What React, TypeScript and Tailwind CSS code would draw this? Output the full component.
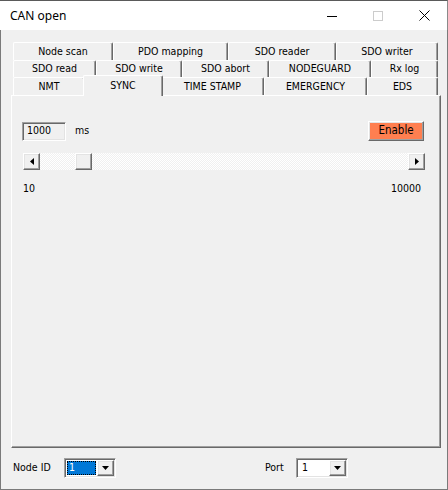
import React from 'react';

// classic win32 3D edges
const raised =
  'border border-t-white border-l-white border-r-[#696969] border-b-[#696969] shadow-[inset_-1px_-1px_0_#a0a0a0,inset_1px_1px_0_#e3e3e3]';
const sunken =
  'border border-t-[#a0a0a0] border-l-[#a0a0a0] border-r-white border-b-white shadow-[inset_1px_1px_0_#696969,inset_-1px_-1px_0_#e3e3e3]';

type TabDef = { label: string; w: string; active?: boolean };

const row1: TabDef[] = [
  { label: 'Node scan', w: 'w-[100px]' },
  { label: 'PDO mapping', w: 'w-[115px]' },
  { label: 'SDO reader', w: 'w-[108px]' },
  { label: 'SDO writer', w: 'w-[102px]' },
];
const row2: TabDef[] = [
  { label: 'SDO read', w: 'w-[83px]' },
  { label: 'SDO write', w: 'w-[86px]' },
  { label: 'SDO abort', w: 'w-[87px]' },
  { label: 'NODEGUARD', w: 'w-[102px]' },
  { label: 'Rx log', w: 'w-[67px]' },
];
const row3: TabDef[] = [
  { label: 'NMT', w: 'w-[72px]' },
  { label: 'SYNC', w: 'w-[80px] -mx-[2px]', active: true },
  { label: 'TIME STAMP', w: 'w-[103px]' },
  { label: 'EMERGENCY', w: 'w-[103px]' },
  { label: 'EDS', w: 'w-[71px]' },
];

const Tab: React.FC<{ tab: TabDef; h: string }> = ({ tab, h }) => {
  if (tab.active) {
    return (
      <div
        className={`${tab.w} relative z-10 h-[21px] -mb-[1px] flex items-start justify-center pt-[2px] bg-[#f0f0f0] border-t border-l border-r border-t-white border-l-white border-r-[#696969] rounded-t-[2px] shadow-[inset_-1px_0_0_#a0a0a0]`}
      >
        {tab.label}
      </div>
    );
  }
  return (
    <div
      className={`${tab.w} ${h} flex items-center justify-center bg-[#f0f0f0] border-t border-l border-r border-t-white border-l-white border-r-[#696969] rounded-t-[2px] shadow-[inset_-1px_0_0_#a0a0a0]`}
    >
      {tab.label}
    </div>
  );
};

const DownArrow = () => (
  <svg width="7" height="4" viewBox="0 0 7 4">
    <path d="M0 0h7L3.5 4z" fill="#000" />
  </svg>
);

const Combo: React.FC<{ focused?: boolean }> = ({ focused }) => (
  <div className={`${sunken} w-[52px] h-[20px] flex bg-white p-[1px]`}>
    <div className="flex-1 flex items-center p-[1px]">
      {focused ? (
        <div className="w-full h-full bg-[#0078d7] border border-dotted border-black text-white flex items-center pl-[1px]">
          1
        </div>
      ) : (
        <span className="pl-[3px]">1</span>
      )}
    </div>
    <div className={`${raised} w-[17px] bg-[#f0f0f0] flex items-center justify-center`}>
      <DownArrow />
    </div>
  </div>
);

export default function App() {
  return (
    <div className="w-[448px] h-[490px] flex flex-col bg-[#f0f0f0] text-[10.5px] text-black font-['DejaVu_Sans_Condensed','DejaVu_Sans',sans-serif] [font-stretch:condensed] select-none">
      {/* title bar */}
      <div className="h-[30px] flex items-center bg-white border-t border-r border-t-[#5a5a5a] border-r-[#8a8a8a]">
        <span className="pl-[10px] text-[12px] font-['Noto_Sans',sans-serif] [font-stretch:normal] flex-1">CAN open</span>
        <div className="w-[46px] h-full flex items-center justify-center">
          <svg width="10" height="10" viewBox="0 0 10 10">
            <path d="M0 5.5h10" stroke="#000" strokeWidth="1" />
          </svg>
        </div>
        <div className="w-[46px] h-full flex items-center justify-center">
          <svg width="10" height="10" viewBox="0 0 10 10">
            <rect x="0.5" y="0.5" width="9" height="9" fill="none" stroke="#cccccc" />
          </svg>
        </div>
        <div className="w-[46px] h-full flex items-center justify-center">
          <svg width="11" height="11" viewBox="0 0 11 11">
            <path d="M0.5 0.5l10 10M10.5 0.5l-10 10" stroke="#000" strokeWidth="1" />
          </svg>
        </div>
      </div>

      {/* client area */}
      <div className="flex-1 flex flex-col border-l border-r border-b border-[#7a7a7a] pt-[12px] pl-[10px]">
        {/* tabs */}
        <div className="ml-[2px] w-[425px] flex flex-col">
          <div className="flex">
            {row1.map((t) => (
              <Tab key={t.label} tab={t} h="h-[18px]" />
            ))}
          </div>
          <div className="flex">
            {row2.map((t) => (
              <Tab key={t.label} tab={t} h="h-[17px]" />
            ))}
          </div>
          <div className="flex items-end h-[18px]">
            {row3.map((t) => (
              <Tab key={t.label} tab={t} h="h-[18px]" />
            ))}
          </div>
        </div>

        {/* tab page */}
        <div className="w-[430px] h-[353px] border border-t-white border-l-white border-r-[#696969] border-b-[#696969] shadow-[inset_-1px_-1px_0_#a0a0a0] pt-[25px] pl-[10px] pr-[16px]">
          <div className="flex items-center">
            <div className={`${sunken} w-[44px] h-[19px] flex items-center pl-[4px] bg-[#f0f0f0]`}>1000</div>
            <span className="ml-[9px]">ms</span>
            <div className="flex-1" />
            <button className={`${raised} w-[56px] h-[20px] bg-[#ff7f50] flex items-center justify-center text-[11.5px]`}>
              Enable
            </button>
          </div>

          <div className="mt-[12px] ml-[1px] mr-[-1px] h-[17px] flex">
            <div className={`${raised} w-[17px] bg-[#f0f0f0] flex items-center justify-center`}>
              <svg width="4" height="7" viewBox="0 0 4 7">
                <path d="M4 0v7L0 3.5z" fill="#000" />
              </svg>
            </div>
            <div className="flex-1 flex pl-[35px] bg-[repeating-conic-gradient(#ffffff_0%_25%,#f0f0f0_0%_50%)] bg-[length:2px_2px]">
              <div className={`${raised} w-[17px] h-full bg-[#f0f0f0]`} />
            </div>
            <div className={`${raised} w-[17px] bg-[#f0f0f0] flex items-center justify-center`}>
              <svg width="4" height="7" viewBox="0 0 4 7">
                <path d="M0 0v7L4 3.5z" fill="#000" />
              </svg>
            </div>
          </div>

          <div className="mt-[11px] ml-[1px] mr-[3px] flex justify-between">
            <span>10</span>
            <span>10000</span>
          </div>
        </div>

        {/* bottom bar */}
        <div className="mt-[10px] flex items-center">
          <span className="ml-[2px] w-[51px]">Node ID</span>
          <Combo focused />
          <span className="ml-[149px] w-[31px]">Port</span>
          <Combo />
        </div>
      </div>
    </div>
  );
}
